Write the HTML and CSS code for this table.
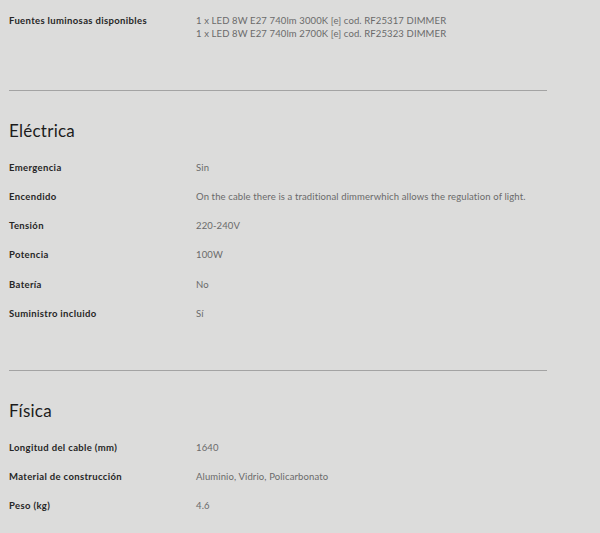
FILE: index.html
```html
<!DOCTYPE html>
<html lang="es">
<head>
<meta charset="utf-8">
<link rel="stylesheet" href="styles.css">
</head>
<body>
<div class="page">
  <section class="group first">
    <div class="row"><div class="label">Fuentes luminosas disponibles</div><div class="value">1 x LED 8W E27 740lm 3000K [e] cod. RF25317 DIMMER<br>1 x LED 8W E27 740lm 2700K [e] cod. RF25323 DIMMER</div></div>
  </section>
  <section class="group">
    <h2 class="title">Eléctrica</h2>
    <div class="row"><div class="label">Emergencia</div><div class="value">Sin</div></div>
    <div class="row"><div class="label">Encendido</div><div class="value">On the cable there is a traditional dimmerwhich allows the regulation of light.</div></div>
    <div class="row"><div class="label">Tensión</div><div class="value">220-240V</div></div>
    <div class="row"><div class="label">Potencia</div><div class="value">100W</div></div>
    <div class="row"><div class="label">Batería</div><div class="value">No</div></div>
    <div class="row"><div class="label">Suministro incluido</div><div class="value">Sí</div></div>
  </section>
  <section class="group">
    <h2 class="title">Física</h2>
    <div class="row"><div class="label">Longitud del cable (mm)</div><div class="value">1640</div></div>
    <div class="row"><div class="label">Material de construcción</div><div class="value">Aluminio, Vidrio, Policarbonato</div></div>
    <div class="row"><div class="label">Peso (kg)</div><div class="value">4.6</div></div>
  </section>
</div>
</body>
</html>
```
FILE: styles.css
```css
html, body {
  margin: 0;
  padding: 0;
  background: #dcdcdb;
}
body {
  font-family: "Lato", "Open Sans", sans-serif;
  color: #222;
}
.page {
  width: 538px;
  padding: 5.5px 0 0 9px;
}
.group {
  border-top: 1px solid #a3a3a3;
  padding-bottom: 42.5px;
}
.group.first {
  border-top: none;
}
.title {
  margin: 29px 0 10.5px;
  font-size: 17px;
  line-height: 22px;
  font-weight: 400;
  letter-spacing: 0.25px;
  color: #1c1c1c;
}
.row {
  display: grid;
  grid-template-columns: 187px 1fr;
  padding: 8.1px 0;
  font-size: 9.5px;
  line-height: 13px;
}
.label {
  font-weight: 700;
  letter-spacing: 0.35px;
  color: #262626;
}
.value {
  color: #6a6a6a;
  letter-spacing: 0.12px;
}
```
